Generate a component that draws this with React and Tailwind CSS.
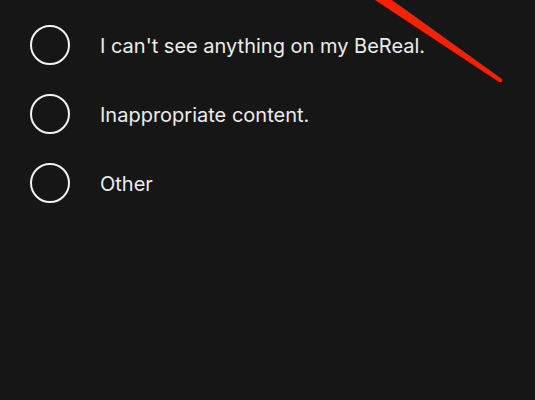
import React from "react";

const reasons = [
  "I can't see anything on my BeReal.",
  "Inappropriate content.",
  "Other",
];

export default function App() {
  return (
    <div className="relative w-[535px] h-[400px] overflow-hidden bg-[#161616] font-['Inter',sans-serif]">
      {/* Reason list */}
      <ul className="flex flex-col gap-[29px] pt-[25px] pl-[30px]">
        {reasons.map((r) => (
          <li key={r} className="flex items-center gap-[30px] h-[40px]">
            <span className="size-[40px] rounded-full border-2 border-[#f2f2f2] shrink-0"></span>
            <span className="text-[20px] text-[#ececec] pt-[1px]">{r}</span>
          </li>
        ))}
      </ul>

      {/* Red annotation stroke */}
      <svg className="absolute left-0 top-0 pointer-events-none" width="535" height="400">
        <polygon points="375,0 392,0 502,79 499,82" fill="#f0220a" />
        <circle cx="500.5" cy="80.5" r="1.8" fill="#f0220a" />
      </svg>
    </div>
  );
}
